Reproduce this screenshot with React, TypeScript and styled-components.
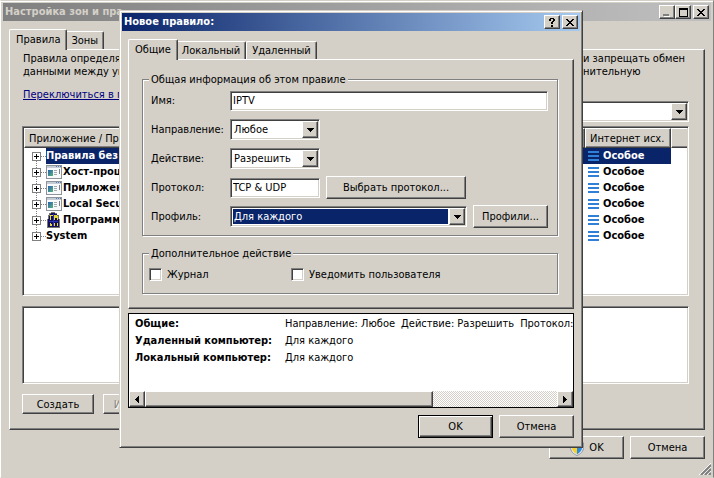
import React from 'react';
import styled, { createGlobalStyle, css } from 'styled-components';

const face = '#d4d0c8';
const shadow = '#808080';
const dark = '#404040';
const navy = '#0a246a';

const GlobalStyle = createGlobalStyle`
  *, *::before, *::after { box-sizing: border-box; }
  body {
    margin: 0;
    background: ${face};
    color: #000;
    font: 11px/13px "DejaVu Sans Condensed", "DejaVu Sans", sans-serif;
  }
  button, input, select { font: inherit; color: inherit; margin: 0; border-radius: 0; }
`;

const raised = css`
  border: 1px solid;
  border-color: #fff ${dark} ${dark} #fff;
  box-shadow: inset -1px -1px ${shadow};
  background: ${face};
`;

const sunken = css`
  border: 1px solid;
  border-color: ${shadow} #fff #fff ${shadow};
  box-shadow: inset 1px 1px ${dark}, inset -1px -1px ${face};
  background: #fff;
`;

const Window = styled.main`
  position: relative;
  display: flex;
  flex-direction: column;
  min-height: 100vh;
  padding: 2px;
  overflow: hidden;
  background: ${face};
  border: 1px solid;
  border-color: ${face} ${shadow} ${face} #fff;
  box-shadow: inset 0 1px #fff;
`;

const Dialog = styled.section`
  position: absolute;
  top: 9px;
  left: 118px;
  right: 130px;
  z-index: 5;
  padding: 2px;
  background: ${face};
  border: 1px solid;
  border-color: ${face} ${dark} ${dark} ${face};
  box-shadow: inset 1px 1px #fff, inset -1px -1px ${shadow};
`;

const TitleBar = styled.header<{ $active?: boolean }>`
  display: flex;
  align-items: center;
  gap: 2px;
  height: 18px;
  padding: 0 2px;
  color: ${p => (p.$active ? '#fff' : face)};
  background: ${p => (p.$active
    ? `linear-gradient(90deg, ${navy}, #a6caf0)`
    : 'linear-gradient(90deg, #808080, #c0c0c0)')};
`;

const Title = styled.h1`
  flex: 1;
  margin: 0;
  font-size: 11px;
  line-height: 18px;
  white-space: nowrap;
`;

const ControlGroup = styled.div`
  display: flex;
`;

const ControlButton = styled.button`
  ${raised}
  display: grid;
  place-items: center;
  width: 16px;
  height: 14px;
  padding: 0;
`;

const Body = styled.div`
  display: flex;
  flex: 1;
  flex-direction: column;
  padding: 8px 6px 0;
`;

const TabList = styled.div`
  display: flex;
  align-items: flex-end;
  height: 20px;
`;

const Tab = styled.button<{ $selected?: boolean }>`
  position: relative;
  height: ${p => (p.$selected ? 21 : 18)}px;
  padding: 0 5px;
  background: ${face};
  border: 1px solid;
  border-color: #fff ${dark} transparent #fff;
  border-bottom: 0;
  border-radius: 2px 2px 0 0;
  box-shadow: inset -1px 0 ${shadow};
  ${p => p.$selected && css`
    z-index: 1;
    margin: 0 -2px -1px 0;
    padding: 0 6px 2px;
  `}
`;

const Panel = styled.div`
  ${raised}
  display: flex;
  flex: 1;
  flex-direction: column;
`;

const MainPanel = styled(Panel)`
  padding: 2px 15px 15px 12px;
`;

const Intro = styled.div`
  display: grid;
  grid-template-columns: 1fr 106px;
  padding-left: 1px;
  white-space: nowrap;
`;

const IntroText = styled.p`
  margin: 0;
  white-space: pre;
`;

const SwitchLink = styled.a`
  align-self: flex-start;
  margin: 10px 0 0 1px;
  color: #00007f;
  white-space: nowrap;
`;

const ComboBox = styled.span<{ $width?: number; $end?: boolean }>`
  ${sunken}
  display: grid;
  grid-template-columns: 1fr 16px;
  flex: ${p => (p.$width ? 'none' : 1)};
  align-self: ${p => (p.$end ? 'flex-end' : 'auto')};
  width: ${p => (p.$width ? `${p.$width}px` : 'auto')};
  height: 21px;
  padding: 1px;
`;

const ComboSelect = styled.select<{ $focused?: boolean }>`
  grid-area: 1 / 1 / 2 / 3;
  min-width: 0;
  padding: 0 1px;
  appearance: none;
  outline: 0;
  border: 1px solid #fff;
  border-right-width: 17px;
  background: ${p => (p.$focused ? navy : '#fff')};
  color: ${p => (p.$focused ? '#fff' : '#000')};
`;

const ComboArrow = styled.span`
  ${raised}
  display: grid;
  grid-area: 1 / 2 / 2 / 3;
  place-items: center;
  pointer-events: none;
`;

const ListBox = styled.div`
  ${sunken}
  flex: 1;
  margin-top: 4px;
  padding: 1px;
  overflow: hidden;
`;

const DetailsBox = styled.div`
  ${sunken}
  height: 78px;
  margin: 10px 0;
`;

const RulesTable = styled.table`
  width: 100%;
  table-layout: fixed;
  border-collapse: separate;
  border-spacing: 0;
`;

const Column = styled.col<{ $width?: number }>`
  width: ${p => (p.$width ? `${p.$width}px` : 'auto')};
`;

const HeadCell = styled.th<{ $last?: boolean }>`
  ${raised}
  height: 20px;
  padding: 0 4px;
  font-weight: normal;
  text-align: left;
  white-space: nowrap;
  ${p => p.$last && css`
    border-right: 0;
    box-shadow: inset 0 -1px ${shadow};
  `}
`;

const Cell = styled.td<{ $selected?: boolean }>`
  padding: 0;
  font-weight: bold;
  white-space: nowrap;
  background: ${p => (p.$selected ? navy : 'transparent')};
  color: ${p => (p.$selected ? '#fff' : '#000')};
`;

const TreeItem = styled.div`
  display: flex;
  align-items: center;
  height: 16px;
  padding-left: 8px;
`;

const Expander = styled.button<{ $last?: boolean }>`
  position: relative;
  width: 9px;
  height: 9px;
  margin: 1px 5px 0 0;
  padding: 0;
  border: 1px solid ${shadow};
  background:
    linear-gradient(#000, #000) center / 5px 1px no-repeat,
    linear-gradient(#000, #000) center / 1px 5px no-repeat,
    #fff;
  &::before {
    content: '';
    position: absolute;
    top: 3px;
    left: 8px;
    width: 5px;
    border-top: 1px dotted ${shadow};
  }
  &::after {
    content: '';
    position: absolute;
    top: 8px;
    left: 3px;
    height: ${p => (p.$last ? 0 : 7)}px;
    border-left: 1px dotted ${shadow};
  }
`;

const TreeLabel = styled.span<{ $selected?: boolean }>`
  display: flex;
  flex: 1;
  gap: 1px;
  align-items: center;
  height: 16px;
  padding-bottom: 1px;
  background: ${p => (p.$selected ? navy : 'transparent')};
  color: ${p => (p.$selected ? '#fff' : '#000')};
`;

const AccessItem = styled.div`
  display: flex;
  gap: 4px;
  align-items: center;
  height: 16px;
  padding: 0 0 1px 3px;
`;

const Actions = styled.div<{ $gap: number }>`
  display: flex;
  gap: ${p => p.$gap}px;
`;

const Button = styled.button<{ $width?: number; $compact?: boolean; $default?: boolean }>`
  ${raised}
  display: inline-flex;
  flex: none;
  gap: 4px;
  align-items: center;
  justify-content: center;
  width: ${p => p.$width ?? 75}px;
  height: ${p => (p.$compact ? 20 : 23)}px;
  padding: 0;
  white-space: nowrap;
  ${p => p.$default && css`
    border-color: #000;
    box-shadow: inset 1px 1px #fff, inset -1px -1px ${dark}, inset -2px -2px ${shadow};
  `}
  &:disabled {
    color: ${shadow};
    text-shadow: 1px 1px #fff;
  }
`;

const Footer = styled.footer`
  display: flex;
  gap: 6px;
  justify-content: flex-end;
  padding: 6px 0 16px;
`;

const DialogFooter = styled(Footer)`
  padding: 7px 0;
`;

const Grip = styled.svg`
  position: absolute;
  right: 2px;
  bottom: 2px;
`;

const DialogPanel = styled(Panel)`
  gap: 11px;
  padding: 13px 15px 14px 13px;
`;

const Group = styled.fieldset`
  min-width: 0;
  margin: 0;
  padding: 0 9px 4px 6px;
  border: 1px solid ${shadow};
  box-shadow: inset 1px 1px #fff, 1px 1px #fff;
`;

const Legend = styled.legend`
  padding: 0 2px;
  background: ${face};
`;

const FormGrid = styled.div`
  display: grid;
  grid-template-columns: 79px 1fr;
  grid-auto-rows: 29px;
  align-items: center;
  padding-left: 2px;
`;

const Controls = styled.div`
  display: flex;
  gap: 6px;
  align-items: center;
`;

const TextInput = styled.input<{ $width?: number }>`
  ${sunken}
  flex: ${p => (p.$width ? 'none' : 1)};
  min-width: 0;
  width: ${p => (p.$width ? `${p.$width}px` : 'auto')};
  height: 20px;
  padding: 0 2px;
  outline: 0;
`;

const CheckRow = styled.div`
  display: grid;
  grid-template-columns: 142px 1fr;
  padding: 8px 0;
`;

const CheckLabel = styled.label`
  display: flex;
  gap: 5px;
  align-items: center;
`;

const CheckBox = styled.input`
  ${sunken}
  width: 13px;
  height: 13px;
  margin: 0;
  appearance: none;
`;

const Summary = styled.div`
  margin-top: 4px;
  border: 1px solid #000;
  background: #fff;
  overflow: hidden;
`;

const SummaryList = styled.dl`
  display: grid;
  grid-template-columns: 150px 1fr;
  grid-auto-rows: 17px;
  height: 77px;
  margin: 0;
  padding: 1px 0 0 6px;
  line-height: 17px;
  white-space: nowrap;
`;

const Term = styled.dt`
  font-weight: bold;
`;

const Description = styled.dd`
  display: flex;
  gap: 6px;
  min-width: 0;
  margin: 0;
`;

const ScrollBar = styled.div`
  display: flex;
  height: 16px;
  background: repeating-conic-gradient(#fff 0 25%, ${face} 0 50%) 0 0 / 2px 2px;
`;

const ScrollButton = styled.button`
  ${raised}
  display: grid;
  place-items: center;
  width: 16px;
  padding: 0;
`;

const ScrollTrack = styled.div`
  display: flex;
  flex: 1;
`;

const ScrollThumb = styled.div`
  ${raised}
  width: 70%;
`;

const CloseGlyph = () => (
  <svg width="8" height="7" viewBox="0 0 8 7" shapeRendering="crispEdges" aria-hidden="true">
    <path d="M0 0h2v1h1v1h2V1h1V0h2v1H7v1H6v1H5v1h1v1h1v1h1v1H6V6H5V5H3v1H2v1H0V6h1V5h1V4h1V3H2V2H1V1H0z" />
  </svg>
);

const HelpGlyph = () => (
  <svg width="6" height="9" viewBox="0 0 6 9" shapeRendering="crispEdges" aria-hidden="true">
    <path d="M1 0h4v1h1v2H5v1H4v2H2V4h1V3h1V1H2v2H0V1h1zM2 7h2v2H2z" />
  </svg>
);

const MaximizeGlyph = () => (
  <svg width="9" height="9" viewBox="0 0 9 9" shapeRendering="crispEdges" aria-hidden="true">
    <path fillRule="evenodd" d="M0 0h9v9H0zM1 2v6h7V2z" />
  </svg>
);

const MinimizeGlyph = () => (
  <svg width="8" height="9" viewBox="0 0 8 9" shapeRendering="crispEdges" aria-hidden="true">
    <path fill="#fff" d="M1 8h6v1H1z" />
    <path fill={shadow} d="M0 6h6v2H0z" />
  </svg>
);

const DownArrow = () => (
  <svg width="7" height="4" viewBox="0 0 7 4" shapeRendering="crispEdges" aria-hidden="true">
    <path d="M0 0h7v1H6v1H5v1H4v1H3V3H2V2H1V1H0z" />
  </svg>
);

const SideArrow = ({ direction }: { direction: 'left' | 'right' }) => (
  <svg width="4" height="7" viewBox="0 0 4 7" shapeRendering="crispEdges" aria-hidden="true">
    {direction === 'left'
      ? <path d="M4 0v7H3V6H2V5H1V4H0V3h1V2h1V1h1V0z" />
      : <path d="M0 0v7h1V6h1V5h1V4h1V3H3V2H2V1H1V0z" />}
  </svg>
);

const ListGlyph = () => (
  <svg width="11" height="10" viewBox="0 0 11 10" shapeRendering="crispEdges" aria-hidden="true">
    <path fill="#3080d8" d="M0 0h11v2H0zM0 4h11v2H0zM0 8h11v2H0z" />
  </svg>
);

const AppGlyph = () => (
  <svg width="16" height="14" viewBox="0 0 16 14" shapeRendering="crispEdges" aria-hidden="true">
    <defs>
      <linearGradient id="appPane" x1="0" y1="0" x2="1" y2="1">
        <stop offset="0" stopColor="#2a5fae" />
        <stop offset="1" stopColor="#58b47c" />
      </linearGradient>
    </defs>
    <path fill="#8e9299" d="M0 0h16v14H0z" />
    <path fill="#f8f9fb" d="M1 1h14v12H1z" />
    <path fill="#c5ccd6" d="M1 1h14v2H1z" />
    <path fill="#5a7db5" d="M10 1h1v1h-1zM12 1h1v1h-1zM14 1h1v1h-1z" />
    <path fill="url(#appPane)" d="M2 5h5v6H2z" />
    <path fill="#a3a7ad" d="M8 5h3v1H8zM8 7h3v1H8zM8 9h3v1H8z" />
    <path fill="#7b8087" d="M13 4h1v5h-1z" />
  </svg>
);

const CastleGlyph = () => (
  <svg width="16" height="16" viewBox="0 0 16 16" shapeRendering="crispEdges" aria-hidden="true">
    <path fill="#77776c" d="M5 0h4v1h2v2h2v4h1v9H1V7h1V3h1V1h2z" />
    <path fill="#10105c" d="M5 1h4v1h2v2h1v3h1v8H2V7h1V4h1V2h1z" />
    <path fill="#e8d838" d="M4 3h3v1H5v4H4zM9 3h2v1h1v4h-1V6H9v2H8V3zM4 11h1v1h1v2H4zM8 11h1v3H8zM11 11h1v3h-1z" />
    <path fill="#2830b8" d="M7 2h1v12H7zM3 9h9v1H3z" />
  </svg>
);

const ShieldGlyph = () => (
  <svg width="16" height="16" viewBox="0 0 16 16" aria-hidden="true">
    <path fill="#e4e8ee" stroke="#8d949e" d="M8 .5l6.5 2.3v4.6c0 3.8-2.7 6.6-6.5 8.1-3.8-1.5-6.5-4.3-6.5-8.1V2.800z" />
    <path fill="#2b7cd3" d="M8 2L3 3.800V8h5z" />
    <path fill="#f8cf2c" d="M8 2l5 1.800V8H8zM3 8c.3 2.800 2.200 4.800 5 6.200V8z" />
    <path fill="#2b8be0" d="M13 8c-.3 2.800-2.200 4.800-5 6.200V8z" />
  </svg>
);

interface ComboProps {
  id?: string;
  label?: string;
  value: string;
  width?: number;
  end?: boolean;
  focused?: boolean;
}

const Combo = ({ id, label, value, width, end, focused }: ComboProps) => (
  <ComboBox $width={width} $end={end}>
    <ComboSelect id={id} aria-label={label} $focused={focused}>
      <option>{value}</option>
    </ComboSelect>
    <ComboArrow><DownArrow /></ComboArrow>
  </ComboBox>
);

const rules = [
  { name: 'Правила без', icon: null, selected: true },
  { name: 'Хост-проц', icon: <AppGlyph /> },
  { name: 'Приложен', icon: <AppGlyph /> },
  { name: 'Local Secu', icon: <AppGlyph /> },
  { name: 'Программ', icon: <CastleGlyph /> },
  { name: 'System', icon: null },
];

const RuleDialog = () => (
  <Dialog role="dialog" aria-label="Новое правило">
    <TitleBar $active>
      <Title as="h2">Новое правило:</Title>
      <ControlButton aria-label="Справка"><HelpGlyph /></ControlButton>
      <ControlButton aria-label="Закрыть"><CloseGlyph /></ControlButton>
    </TitleBar>
    <Body>
      <TabList role="tablist">
        <Tab role="tab" aria-selected $selected>Общие</Tab>
        <Tab role="tab">Локальный</Tab>
        <Tab role="tab">Удаленный</Tab>
      </TabList>
      <DialogPanel>
        <Group>
          <Legend>Общая информация об этом правиле</Legend>
          <FormGrid>
            <label htmlFor="name">Имя:</label>
            <Controls><TextInput id="name" defaultValue="IPTV" /></Controls>
            <label htmlFor="direction">Направление:</label>
            <Controls><Combo id="direction" value="Любое" width={90} /></Controls>
            <label htmlFor="action">Действие:</label>
            <Controls><Combo id="action" value="Разрешить" width={90} /></Controls>
            <label htmlFor="protocol">Протокол:</label>
            <Controls>
              <TextInput id="protocol" defaultValue="TCP & UDP" $width={90} />
              <Button $width={140}>Выбрать протокол...</Button>
            </Controls>
            <label htmlFor="profile">Профиль:</label>
            <Controls>
              <Combo id="profile" value="Для каждого" focused />
              <Button>Профили...</Button>
            </Controls>
          </FormGrid>
        </Group>
        <Group>
          <Legend>Дополнительное действие</Legend>
          <CheckRow>
            <CheckLabel><CheckBox type="checkbox" />Журнал</CheckLabel>
            <CheckLabel><CheckBox type="checkbox" />Уведомить пользователя</CheckLabel>
          </CheckRow>
        </Group>
      </DialogPanel>
      <Summary>
        <SummaryList>
          <Term>Общие:</Term>
          <Description>
            <span>Направление: Любое</span>
            <span>Действие: Разрешить</span>
            <span>Протокол:</span>
          </Description>
          <Term>Удаленный компьютер:</Term>
          <Description>Для каждого</Description>
          <Term>Локальный компьютер:</Term>
          <Description>Для каждого</Description>
        </SummaryList>
        <ScrollBar>
          <ScrollButton aria-label="Влево"><SideArrow direction="left" /></ScrollButton>
          <ScrollTrack><ScrollThumb /></ScrollTrack>
          <ScrollButton aria-label="Вправо"><SideArrow direction="right" /></ScrollButton>
        </ScrollBar>
      </Summary>
      <DialogFooter>
        <Button $default>OK</Button>
        <Button>Отмена</Button>
      </DialogFooter>
    </Body>
  </Dialog>
);

export default function App() {
  return (
    <>
      <GlobalStyle />
      <Window>
        <TitleBar>
          <Title>Настройка зон и пра</Title>
          <ControlGroup>
            <ControlButton aria-label="Свернуть"><MinimizeGlyph /></ControlButton>
            <ControlButton aria-label="Развернуть"><MaximizeGlyph /></ControlButton>
          </ControlGroup>
          <ControlButton aria-label="Закрыть"><CloseGlyph /></ControlButton>
        </TitleBar>
        <Body>
          <TabList role="tablist">
            <Tab role="tab" aria-selected $selected>Правила</Tab>
            <Tab role="tab">Зоны</Tab>
          </TabList>
          <MainPanel>
            <Intro>
              <IntroText>{'Правила определя\nданными между ук'}</IntroText>
              <IntroText>{'и запрещать обмен\nнительную'}</IntroText>
            </Intro>
            <SwitchLink href="#">Переключиться в п</SwitchLink>
            <Combo label="Профиль" value="" width={260} end />
            <ListBox>
              <RulesTable>
                <colgroup>
                  <Column />
                  <Column $width={86} />
                  <Column $width={16} />
                </colgroup>
                <thead>
                  <tr>
                    <HeadCell>Приложение / Пра</HeadCell>
                    <HeadCell>Интернет исх.</HeadCell>
                    <HeadCell $last />
                  </tr>
                </thead>
                <tbody>
                  {rules.map((rule, index) => (
                    <tr key={rule.name}>
                      <Cell>
                        <TreeItem>
                          <Expander aria-label="Развернуть" $last={index === rules.length - 1} />
                          <TreeLabel $selected={rule.selected}>{rule.icon}{rule.name}</TreeLabel>
                        </TreeItem>
                      </Cell>
                      <Cell $selected={rule.selected}>
                        <AccessItem><ListGlyph />Особое</AccessItem>
                      </Cell>
                      <Cell />
                    </tr>
                  ))}
                </tbody>
              </RulesTable>
            </ListBox>
            <DetailsBox />
            <Actions $gap={9}>
              <Button $width={72} $compact>Создать</Button>
              <Button $width={72} $compact disabled>Изменить</Button>
            </Actions>
          </MainPanel>
          <Footer>
            <Button><ShieldGlyph />OK</Button>
            <Button>Отмена</Button>
          </Footer>
        </Body>
        <RuleDialog />
        <Grip width="12" height="12" viewBox="0 0 12 12" aria-hidden="true">
          <path stroke="#fff" d="M0 12L12 0M4 12l8-8M8 12l4-4" />
          <path stroke={shadow} strokeWidth="2" d="M2 12L12 2M6 12l6-6M10 12l2-2" />
        </Grip>
      </Window>
    </>
  );
}
